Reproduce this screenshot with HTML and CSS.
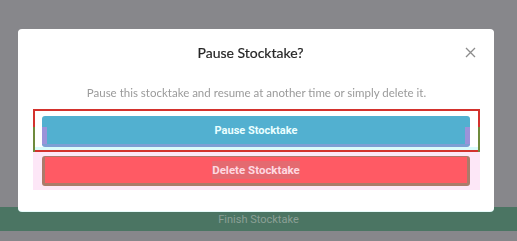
FILE: index.html
```html
<!DOCTYPE html>
<html>
<head>
<meta charset="utf-8">
<link rel="stylesheet" href="styles.css">
</head>
<body>
<div class="page">
  <div class="finish-bar">Finish Stocktake</div>
</div>
<div class="modal">
  <div class="modal-header">
    <h2 class="modal-title">Pause Stocktake?</h2>
    <button class="close" aria-label="Close">
      <svg width="11" height="11" viewBox="0 0 11 11"><path d="M1 1L10 10M10 1L1 10" stroke="#8c8c8c" stroke-width="1.3" fill="none"/></svg>
    </button>
  </div>
  <p class="modal-desc">Pause this stocktake and resume at another time or simply delete it.</p>
  <div class="highlight-box">
    <button class="btn btn-pause">Pause Stocktake</button>
  </div>
  <div class="pink-zone">
    <button class="btn btn-delete"><span class="btn-label">Delete Stocktake</span></button>
  </div>
</div>
</body>
</html>
```
FILE: styles.css
```css
html, body {
  margin: 0;
  padding: 0;
}
body {
  width: 517px;
  height: 241px;
  overflow: hidden;
  background: #87878b;
  font-family: "Lato", "Liberation Sans", sans-serif;
}
.page {
  height: 241px;
  display: flex;
  flex-direction: column;
  justify-content: flex-end;
  padding-bottom: 10px;
  box-sizing: border-box;
}
.finish-bar {
  height: 24px;
  background: #4b7563;
  color: #8ba096;
  font-family: "Roboto", sans-serif;
  font-size: 11px;
  display: flex;
  align-items: center;
  justify-content: center;
}
.modal {
  position: fixed;
  top: 29px;
  left: 18px;
  width: 476px;
  height: 182px;
  box-sizing: border-box;
  background: #fff;
  border-radius: 4px;
  padding: 0 14px 0 15px;
  box-shadow: 0 1px 0 #e6fbfa;
}
.modal-header {
  position: relative;
  padding-top: 15px;
  padding-right: 12px;
  height: 18px;
  display: flex;
  justify-content: center;
}
.modal-title {
  margin: 0;
  font-size: 14px;
  font-weight: 400;
  line-height: 18px;
  color: #262626;
  -webkit-text-stroke: 0.2px #262626;
}
.close {
  position: absolute;
  right: 4px;
  top: 18px;
  padding: 0;
  border: 0;
  background: none;
  line-height: 0;
}
.modal-desc {
  margin: 23px 0 8px;
  text-align: center;
  font-size: 11.5px;
  line-height: 16px;
  color: #9a9a9a;
}
.highlight-box {
  position: relative;
  border: 2px solid #d3322d;
  padding: 5px 8px 3px 7px;
  background: linear-gradient(to top, #d9fcfb 3px, #ffffff 3px);
}
.highlight-box::before,
.highlight-box::after {
  content: "";
  position: absolute;
  bottom: -2px;
  width: 2px;
  height: 25px;
  background: #6f8a3c;
}
.highlight-box::before { left: -2px; }
.highlight-box::after { right: -2px; }
.btn {
  display: flex;
  align-items: center;
  justify-content: center;
  width: 100%;
  border: 0;
  border-radius: 3px;
  font-family: "Roboto", sans-serif;
  font-weight: 700;
  font-size: 11px;
  padding: 0;
  position: relative;
}
.btn-pause {
  height: 31px;
  background: #52b0d0;
  color: #eaffff;
  border-bottom: 3px solid #7e9fd4;
  box-sizing: border-box;
}
.btn-pause::before,
.btn-pause::after {
  content: "";
  position: absolute;
  top: 11px;
  width: 5px;
  height: 17px;
  background: #9b93d9;
}
.btn-pause::before { left: 0; }
.btn-pause::after { right: 0; }
.pink-zone {
  background: #fde7f7;
  padding: 4px 10px 4px 9px;
}
.btn-delete {
  height: 30px;
  box-sizing: border-box;
  background: #ff5a64;
  color: #ffd9e1;
  border: 3px solid #ab7a6a;
  border-top-width: 1px;
  font-size: 11.5px;
}
.btn-label {
  background: #e46a70;
  padding: 2px 0;
}
```
